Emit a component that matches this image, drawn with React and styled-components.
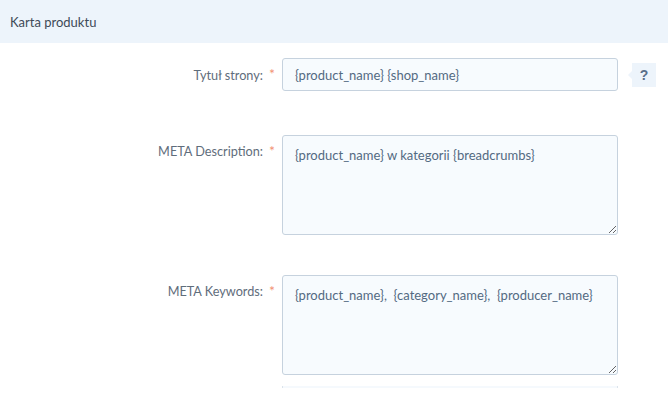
import React from 'react';
import styled, { createGlobalStyle } from 'styled-components';

const GlobalStyle = createGlobalStyle`
  html, body {
    margin: 0;
    padding: 0;
    background: #ffffff;
    font-family: Lato, 'Liberation Sans', sans-serif;
  }
`;

const Panel = styled.div`
  width: 668px;
  height: 403px;
  overflow: hidden;
  background: #ffffff;
`;

const Header = styled.div`
  height: 43px;
  display: flex;
  align-items: center;
  padding-left: 10px;
  background: #edf4fb;
  color: #3e4a57;
  font-size: 13px;
`;

const Form = styled.div`
  display: flex;
  flex-direction: column;
  padding-top: 15px;
`;

const Row = styled.div`
  display: grid;
  grid-template-columns: 263px 19px 336px 14px 24px;
  align-items: start;
  margin-bottom: ${(p) => p.gap}px;
`;

const Label = styled.label`
  text-align: right;
  color: #5f6d7b;
  font-size: 12.7px;
  line-height: 18px;
  padding-top: ${(p) => (p.single ? 8 : 7)}px;
`;

const Star = styled.span`
  color: #f29274;
  font-size: 14px;
  line-height: 18px;
  padding-top: 7px;
  padding-left: 6px;
`;

const fieldBase = `
  box-sizing: border-box;
  width: 336px;
  margin: 0;
  background: #f7fbfe;
  border: 1px solid #c6d2de;
  border-radius: 3px;
  color: #536a82;
  font-family: Lato, 'Liberation Sans', sans-serif;
  font-size: 13px;
  line-height: 18px;
  outline: none;
`;

const Input = styled.input`
  ${fieldBase}
  height: 33px;
  padding: 0 12px;
`;

const Area = styled.textarea`
  ${fieldBase}
  display: block;
  height: 100px;
  padding: 10px 12px;
  resize: vertical;
`;

const Help = styled.div`
  grid-column: 5;
  position: relative;
  margin-top: 5px;
  width: 24px;
  height: 24px;
  display: flex;
  align-items: center;
  justify-content: center;
  background: #edf4fb;
  color: #5a6f8a;
  font-weight: 700;
  font-size: 14px;
  font-family: 'Liberation Sans', sans-serif;

  &::before {
    content: '';
    position: absolute;
    left: -4px;
    top: 8px;
    border-top: 4px solid transparent;
    border-bottom: 4px solid transparent;
    border-right: 4px solid #edf4fb;
  }
`;

const NextField = styled.div`
  grid-column: 3;
  box-sizing: border-box;
  height: 2px;
  background: #f5f9fd;
  border-left: 1px solid #dbe3eb;
  border-right: 1px solid #dbe3eb;
`;

export default function App() {
  return (
    <Panel>
      <GlobalStyle />
      <Header>Karta produktu</Header>
      <Form>
        <Row gap={44}>
          <Label single>Tytuł strony:</Label>
          <Star>*</Star>
          <Input defaultValue="{product_name} {shop_name}" />
          <Help>?</Help>
        </Row>
        <Row gap={40}>
          <Label>META Description:</Label>
          <Star>*</Star>
          <Area defaultValue="{product_name} w kategorii {breadcrumbs}" />
        </Row>
        <Row gap={11}>
          <Label>META Keywords:</Label>
          <Star>*</Star>
          <Area defaultValue="{product_name},  {category_name},  {producer_name}" />
        </Row>
        <Row gap={0}>
          <NextField />
        </Row>
      </Form>
    </Panel>
  );
}
